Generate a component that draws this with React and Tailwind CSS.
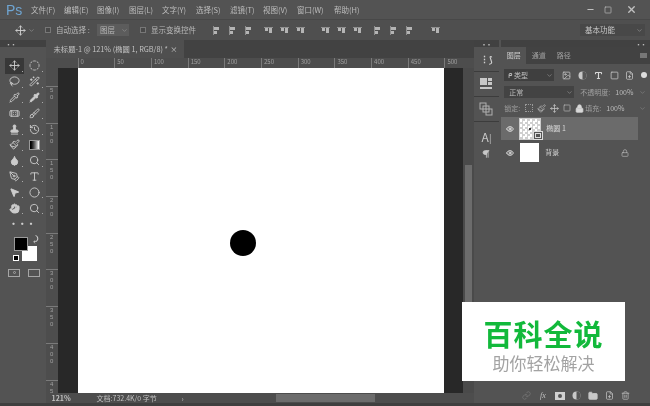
import React from 'react';
import { Move, CircleDashed, Lasso, Wand2, Pipette, Bandage, Brush, Stamp, History, Droplet, Search, PenTool, Type, MousePointer2, Circle, Hand, Eye, Lock, ChevronDown, Minus, Square, X, Link, Folder, Trash2, FilePlus, Image as ImageIcon, Paintbrush, Pilcrow } from 'lucide-react';

const font = "font-['Noto_Sans_CJK_SC','Liberation_Sans',sans-serif]";
const menus = [['文件(F)', 'w-[33px]'], ['编辑(E)', 'w-[33px]'], ['图像(I)', 'w-[32px]'], ['图层(L)', 'w-[33px]'], ['文字(Y)', 'w-[34px]'], ['选择(S)', 'w-[34px]'], ['滤镜(T)', 'w-[33px]'], ['视图(V)', 'w-[34px]'], ['窗口(W)', 'w-[37px]'], ['帮助(H)', 'w-[33px]']];

function AlignIcon({ rotate }) {
  return (
    <div className="flex w-[16px] justify-center">
      <svg width="9" height="9" viewBox="0 0 9 9" style={{ transform: `rotate(${rotate}deg)` }}>
        <rect x="1" y="0" width="1" height="9" fill="#8f8f8f" />
        <rect x="2" y="1" width="5" height="3" fill="#b4b4b4" />
        <rect x="2" y="5" width="3" height="3" fill="#b4b4b4" />
      </svg>
    </div>
  );
}

function Tool({ icon: I, fill, active, children }) {
  return (
    <div className={`relative flex h-[15.8px] w-[19px] items-center justify-center ${active ? 'bg-[#383838]' : ''}`}>
      {I ? <I size={11} strokeWidth={2} color="#cccccc" fill={fill ? '#cccccc' : 'none'} /> : children}
      <span className="absolute bottom-[2px] right-[1px] h-[1px] w-[1px] bg-[#aaaaaa]" />
    </div>
  );
}

const tools = [
  [{ icon: Move, active: true }, { icon: CircleDashed }],
  [{ icon: Lasso }, { icon: Wand2 }],
  [{ icon: Pipette }, { icon: Pipette, fill: true }],
  [{ icon: Bandage }, { icon: Brush }],
  [{ icon: Stamp, fill: true }, { icon: History }],
  [{ icon: Paintbrush }, { grad: true }],
  [{ icon: Droplet, fill: true }, { icon: Search }],
  [{ icon: PenTool }, { icon: Type }],
  [{ icon: MousePointer2, fill: true }, { icon: Circle }],
  [{ icon: Hand, fill: true }, { icon: Search }],
];

function Toolbar() {
  return (
    <div className="flex w-[46px] flex-col bg-[#535353]">
      <div className="flex h-[7px] items-center bg-[#414141] pl-[6px]">
        <span className="text-[5px] leading-none text-[#bbbbbb]">▪▪</span>
      </div>
      <div className="ml-[5px] mt-[11px] flex flex-col">
        {tools.map((row, i) => (
          <div key={i} className="flex w-[40px] gap-[1px]">
            {row.map((t, j) => (
              <Tool key={j} {...t}>
                {t.grad && <div className="h-[10px] w-[11px] border border-[#999999] bg-gradient-to-r from-black to-white" />}
              </Tool>
            ))}
          </div>
        ))}
        <div className="flex h-[16px] w-[40px] items-center pl-[4px] text-[9px] font-bold leading-none tracking-tight text-[#d0d0d0]">•••</div>
      </div>
      <div className="relative ml-[14px] mt-[5px] h-[26px] w-[28px]">
        <div className="absolute left-[8px] top-[9px] h-[15px] w-[15px] bg-white" />
        <div className="absolute left-0 top-0 h-[14px] w-[14px] border border-[#9a9a9a] bg-black" />
        <span className="absolute left-[19px] top-[-2px] text-[8px] leading-none text-[#cfcfcf]">⤸</span>
        <div className="absolute left-0 top-[19px] h-[4px] w-[4px] bg-black outline outline-1 outline-white" />
      </div>
      <div className="mt-[6px] flex justify-between pl-[8px] pr-[6px]">
        <div className="flex h-[8px] w-[12px] items-center justify-center border border-[#a5a5a5]"><div className="h-[3px] w-[3px] rounded-full border border-[#a5a5a5]" /></div>
        <div className="h-[8px] w-[12px] border border-[#a5a5a5]" />
      </div>
    </div>
  );
}

function HRuler() {
  const labels = [0, 50, 100, 150, 200, 250, 300, 350, 400, 450, 500];
  return (
    <div className="flex h-[10px] min-w-0 flex-1 overflow-hidden bg-[#4d4d4d] pl-[20px]">
      {labels.map((l) => (
        <div key={l} className="h-full w-[36.7px] shrink-0 border-l border-[#7a7a7a] pl-[2px] text-[6px] leading-[8px] text-[#a0a0a0]">{l}</div>
      ))}
    </div>
  );
}

function VRuler() {
  const labels = ['5 0', '1 0 0', '1 5 0', '2 0 0', '2 5 0', '3 0 0', '3 5 0', '4 0 0', '4 5'];
  return (
    <div className="flex w-[12px] flex-col bg-[#4d4d4d] pt-[18px]">
      {labels.map((l) => (
        <div key={l} className="flex h-[36.7px] w-full shrink-0 flex-col items-center border-t border-[#7a7a7a] font-['Liberation_Sans',sans-serif] text-[6px] leading-[7px] text-[#a0a0a0]">
          {l.split(' ').map((d, i) => <span key={i}>{d}</span>)}
        </div>
      ))}
    </div>
  );
}

function Center() {
  return (
    <div className="flex w-[428px] flex-col bg-[#424242]">
      <div className="flex h-[18px]">
        <div className="flex w-[138px] items-center justify-between whitespace-nowrap bg-[#4f4f4f] pl-[8px] pr-[6px] text-[7.3px] text-[#c0c0c0]">
          <span>未标题-1 @ 121% (椭圆 1, RGB/8) *</span>
          <span>×</span>
        </div>
      </div>
      <div className="flex h-[10px]">
        <div className="w-[12px] shrink-0 bg-[#4d4d4d]" />
        <HRuler />
        <div className="w-[11px] shrink-0 bg-[#4d4d4d]" />
      </div>
      <div className="flex min-h-0 flex-1">
        <div className="shrink-0 overflow-hidden"><VRuler /></div>
        <div className="flex flex-1 bg-[#282828] pl-[20px] pr-[19px]">
          <div className="relative flex-1 bg-white">
            <div className="absolute left-[152px] top-[162px] h-[26px] w-[26px] rounded-full bg-black" />
          </div>
        </div>
        <div className="flex w-[11px] shrink-0 flex-col bg-[#4a4a4a] px-[2px] pt-[97px]">
          <div className="h-[160px] bg-[#6c6c6c]" />
        </div>
      </div>
      <div className="flex h-[10px] items-center bg-[#4d4d4d] text-[7px] text-[#c0c0c0]">
        <span className="ml-[6px] w-[45px] font-bold">121%</span>
        <span className="w-[85px] whitespace-nowrap">文档:732.4K/0 字节</span>
        <span className="w-[94px] text-[#bbbbbb]">›</span>
        <div className="h-[8px] w-[99px] bg-[#6c6c6c]" />
      </div>
    </div>
  );
}

function Dock() {
  return (
    <div className="flex w-[26px] flex-col bg-[#3f3f3f]">
      <div className="flex h-[7px] items-center justify-center bg-[#414141] text-[5px] leading-none text-[#bbbbbb]">▪▪</div>
      <div className="flex h-[25px] items-center justify-center border-b border-[#3c3c3c] bg-[#535353]"><span className="text-[9px] font-bold leading-none text-[#d0d0d0]">⋮⟆</span></div>
      <div className="flex h-[25px] items-center justify-center border-b border-[#3c3c3c] bg-[#535353]">
        <svg width="12" height="12" viewBox="0 0 12 12"><rect x="0" y="0" width="7" height="7" fill="#c8c8c8" /><rect x="8" y="0" width="4" height="3" fill="#c8c8c8" /><rect x="8" y="4" width="4" height="3" fill="#c8c8c8" /><rect x="0" y="9" width="12" height="2" fill="#c8c8c8" /></svg>
      </div>
      <div className="flex h-[25px] items-center justify-center border-b border-[#3c3c3c] bg-[#535353]">
        <svg width="14" height="14" viewBox="0 0 14 14" fill="none" stroke="#b0b0b0"><rect x="1" y="1" width="6" height="6" /><rect x="4" y="4" width="6" height="6" /><rect x="7" y="7" width="6" height="6" /></svg>
      </div>
      <div className="flex flex-1 flex-col items-center bg-[#535353] pt-[8px]">
        <span className="text-[12px] leading-[14px] text-[#c8c8c8]">A<span className="text-[9px]">|</span></span>
        <Pilcrow size={10} color="#c8c8c8" fill="#c8c8c8" className="mt-[3px]" />
      </div>
    </div>
  );
}

function Panel() {
  return (
    <div className="flex w-[152px] flex-col bg-[#535353] pl-[2px]">
      <div className="flex h-[7px] items-center justify-end bg-[#414141] pr-[4px] text-[5px] leading-none text-[#bbbbbb]">▪▪</div>
      <div className="flex h-[17px] items-stretch bg-[#424242] text-[7px] text-[#a0a0a0]">
        <div className="flex w-[25px] items-center justify-center bg-[#535353] text-[#d0d0d0]">图层</div>
        <div className="flex w-[25px] items-center justify-center">通道</div>
        <div className="flex w-[25px] items-center justify-center">路径</div>
        <div className="ml-auto mr-[2px] flex w-[10px] items-center justify-center"><div className="h-[5px] w-[7px] bg-[#777777]" /></div>
      </div>
      <div className="mt-[5px] flex h-[12px] items-center pl-[3px] pr-[3px]">
        <div className="flex h-full w-[50px] items-center justify-between bg-[#3f3f3f] pl-[4px] pr-[1px] text-[7px] text-[#c0c0c0]">
          <span>ᑭ 类型</span><ChevronDown size={7} color="#999999" />
        </div>
        <div className="ml-[8px] flex flex-1 items-center justify-between">
          <ImageIcon size={9} color="#c8c8c8" />
          <svg width="9" height="9" viewBox="0 0 9 9"><circle cx="4.5" cy="4.5" r="4" fill="#c8c8c8" /><path d="M4.5 .5a4 4 0 0 1 0 8z" fill="#555555" /></svg>
          <Type size={9} color="#d8d8d8" strokeWidth={3} />
          <Square size={9} color="#c8c8c8" strokeWidth={2} />
          <FilePlus size={9} color="#c8c8c8" />
          <span className="h-[6px] w-[6px] rounded-full bg-[#dddddd]" />
        </div>
      </div>
      <div className="mt-[5px] flex h-[12px] items-center pl-[3px] pr-[4px] text-[7px] text-[#bcbcbc]">
        <div className="flex h-full w-[70px] items-center justify-between bg-[#434343] pl-[5px] pr-[1px]">
          <span>正常</span><ChevronDown size={7} color="#999999" />
        </div>
        <span className="ml-[6px] w-[34px] whitespace-nowrap text-[#a0a0a0]">不透明度:</span>
        <span className="ml-[1px] w-[18px]">100%</span>
        <ChevronDown size={7} color="#888888" className="ml-auto" />
      </div>
      <div className="mt-[4px] flex h-[12px] items-center pl-[3px] pr-[4px] text-[7px] text-[#a0a0a0]">
        <span className="w-[21px]">锁定:</span>
        <div className="flex w-[60px] items-center gap-[4px]">
          <span className="h-[8px] w-[8px] border border-dotted border-[#999999]" />
          <Paintbrush size={9} color="#b0b0b0" />
          <Move size={9} color="#c8c8c8" />
          <Square size={8} color="#b8b8b8" />
          <Lock size={9} color="#d8d8d8" fill="#d8d8d8" />
        </div>
        <span className="w-[19px]">填充:</span>
        <span className="ml-[2px] w-[18px] text-[#bcbcbc]">100%</span>
        <ChevronDown size={7} color="#888888" className="ml-auto" />
      </div>
      <div className="mt-[3px] flex flex-1 flex-col">
        <div className="flex h-[23px] w-[137px] items-center bg-[#6b6b6b]">
          <div className="flex w-[18px] justify-center"><Eye size={8} color="#e0e0e0" strokeWidth={3} /></div>
          <div className="relative h-[22px] w-[22px] border border-[#cccccc] bg-[conic-gradient(#cfcfcf_25%,#fff_0_50%,#cfcfcf_0_75%,#fff_0)] bg-[length:5px_5px]">
            <span className="absolute left-[9px] top-[9px] h-[2px] w-[2px] rounded-full bg-black" />
            <span className="absolute bottom-[-1px] right-[-3px] flex h-[9px] w-[10px] items-center justify-center border border-[#dddddd] bg-[#555555]"><span className="h-[5px] w-[6px] border border-[#dddddd]" /></span>
          </div>
          <span className="ml-[5px] text-[7px] text-[#d8d8d8]">椭圆 1</span>
        </div>
        <div className="mt-[1px] flex h-[23px] w-[137px] items-center">
          <div className="flex w-[18px] justify-center"><Eye size={8} color="#e0e0e0" strokeWidth={3} /></div>
          <div className="ml-[1px] h-[19px] w-[19px] bg-white" />
          <span className="ml-[6px] text-[7px] text-[#cccccc]">背景</span>
          <Lock size={8} color="#b8b8b8" className="ml-auto mr-[9px]" />
        </div>
        <div className="mt-auto flex h-[15px] items-center justify-end gap-[7px] pr-[20px]">
          <Link size={9} color="#777777" />
          <span className="w-[10px] text-center font-['Liberation_Serif',serif] text-[8px] italic text-[#c0c0c0]">fx</span>
          <div className="flex h-[8px] w-[10px] items-center justify-center bg-[#d0d0d0]"><span className="h-[4px] w-[4px] rounded-full bg-[#535353]" /></div>
          <svg width="9" height="9" viewBox="0 0 9 9"><circle cx="4.5" cy="4.5" r="4" fill="#c8c8c8" /><path d="M4.5 .5a4 4 0 0 1 0 8z" fill="#555555" /></svg>
          <Folder size={10} color="#c8c8c8" fill="#c8c8c8" />
          <FilePlus size={9} color="#c0c0c0" />
          <Trash2 size={9} color="#b8b8b8" />
        </div>
      </div>
    </div>
  );
}

export default function App() {
  return (
    <div className={`relative flex h-[406px] w-[650px] flex-col overflow-hidden bg-[#535353] blur-[0.4px] ${font}`}>
      <div className="flex h-[20px] items-center border-b border-[#484848] bg-[#535353] text-[7.5px] text-[#bdbdbd]">
        <span className="ml-[6px] w-[25px] font-['Liberation_Sans',sans-serif] text-[14px] leading-none text-[#6fa5d2]">Ps</span>
        {menus.map(([m, w]) => <span key={m} className={`${w} whitespace-nowrap`}>{m}</span>)}
        <div className="ml-auto mr-[13px] flex items-center gap-[9px]">
          <Minus size={9} color="#c0c0c0" strokeWidth={3} />
          <Square size={8} color="#c0c0c0" strokeWidth={2} />
          <X size={11} color="#c0c0c0" className="ml-[5px]" strokeWidth={3} />
        </div>
      </div>
      <div className="flex h-[20px] items-center bg-[#4f4f4f] text-[7.5px] text-[#b8b8b8]">
        <Move size={11} color="#d0d0d0" className="ml-[15px]" />
        <ChevronDown size={7} color="#999999" className="ml-[2px]" />
        <span className="ml-[10px] h-[6px] w-[6px] border border-[#777777] bg-[#484848]" />
        <span className="ml-[5px] w-[41px] whitespace-nowrap">自动选择 :</span>
        <div className="flex h-[12px] w-[32px] items-center justify-between bg-[#5c5c5c] pl-[3px] pr-[1px]">
          <span>图层</span><ChevronDown size={7} color="#999999" />
        </div>
        <span className="ml-[11px] h-[6px] w-[6px] border border-[#777777] bg-[#484848]" />
        <span className="ml-[5px] w-[57px] whitespace-nowrap">显示变换控件</span>
        <div className="flex items-center">
          <AlignIcon rotate={0} /><AlignIcon rotate={0} /><AlignIcon rotate={0} />
          <span className="w-[4px]" />
          <AlignIcon rotate={90} /><AlignIcon rotate={90} /><AlignIcon rotate={90} />
          <span className="w-[9px]" />
          <AlignIcon rotate={90} /><AlignIcon rotate={90} /><AlignIcon rotate={90} />
          <span className="w-[4px]" />
          <AlignIcon rotate={0} /><AlignIcon rotate={0} /><AlignIcon rotate={0} />
          <span className="w-[10px]" />
          <AlignIcon rotate={90} />
        </div>
        <div className="ml-auto mr-[5px] flex h-[12px] w-[65px] items-center justify-between bg-[#484848] pl-[5px] pr-[2px] text-[#c8c8c8]">
          <span>基本功能</span><ChevronDown size={7} color="#999999" />
        </div>
      </div>
      <div className="flex min-h-0 flex-1 border-b-[3px] border-[#3f3f3f]">
        <Toolbar />
        <Center />
        <Dock />
        <Panel />
      </div>
      <div className="absolute left-[462px] top-[302px] flex h-[79px] w-[163px] flex-col items-center bg-white pt-[15px]">
        <div className="text-[29px] font-bold leading-[33px] tracking-[1px] text-[#12b93b]">百科全说</div>
        <div className="mt-[3px] text-[17px] leading-[20px] text-[#a3a3a3]">助你轻松解决</div>
      </div>
    </div>
  );
}
